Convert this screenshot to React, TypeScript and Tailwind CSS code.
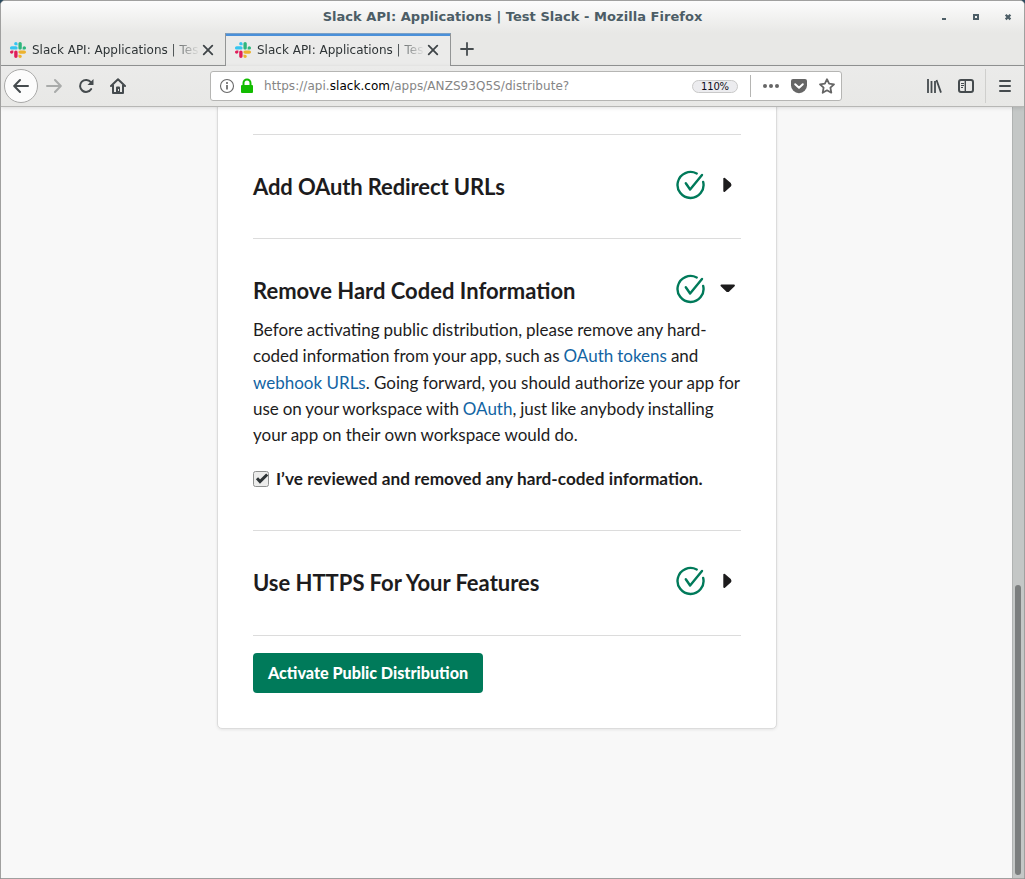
import React from "react";

const UI = "font-['DejaVu_Sans',sans-serif]";

function SlackLogo() {
  return (
    <svg width="16" height="16" viewBox="0 0 122.8 122.8" className="shrink-0">
      <path fill="#E01E5A" d="M25.8 77.6c0 7.1-5.8 12.9-12.9 12.9S0 84.7 0 77.6s5.8-12.9 12.9-12.9h12.9v12.9zm6.5 0c0-7.1 5.8-12.9 12.9-12.9s12.9 5.8 12.9 12.9v32.3c0 7.1-5.8 12.9-12.9 12.9s-12.9-5.8-12.9-12.9V77.6z" />
      <path fill="#36C5F0" d="M45.2 25.8c-7.1 0-12.9-5.8-12.9-12.9S38.1 0 45.2 0s12.9 5.8 12.9 12.9v12.9H45.2zm0 6.5c7.1 0 12.9 5.8 12.9 12.9s-5.8 12.9-12.9 12.9H12.9C5.8 58.1 0 52.3 0 45.2s5.8-12.9 12.9-12.9h32.3z" />
      <path fill="#2EB67D" d="M97 45.2c0-7.1 5.8-12.9 12.9-12.9s12.9 5.8 12.9 12.9-5.8 12.9-12.9 12.9H97V45.2zm-6.5 0c0 7.1-5.8 12.9-12.9 12.9s-12.9-5.8-12.9-12.9V12.9C64.7 5.8 70.5 0 77.6 0s12.9 5.8 12.9 12.9v32.3z" />
      <path fill="#ECB22E" d="M77.6 97c7.1 0 12.9 5.8 12.9 12.9s-5.8 12.9-12.9 12.9-12.9-5.8-12.9-12.9V97h12.9zm0-6.5c-7.1 0-12.9-5.8-12.9-12.9s5.8-12.9 12.9-12.9h32.3c7.1 0 12.9 5.8 12.9 12.9s-5.8 12.9-12.9 12.9H77.6z" />
    </svg>
  );
}

function TabContent() {
  return (
    <>
      <SlackLogo />
      <span className="ml-[6px] w-[166px] text-[12px] leading-4 whitespace-nowrap text-[#2e3436] [mask-image:linear-gradient(to_right,#000_136px,transparent_168px)]">
        Slack API: Applications | Tes
      </span>
      <svg width="12" height="12" viewBox="0 0 12 12" className="ml-1 shrink-0" stroke="#3f4548" strokeWidth="1.8" strokeLinecap="round">
        <path d="M1.7 1.7l8.6 8.6M10.3 1.7l-8.6 8.6" />
      </svg>
    </>
  );
}

function TitleBar() {
  return (
    <div className="relative flex h-[32px] shrink-0 items-center justify-center bg-linear-to-b from-[#fcfcfc] to-[#e8e8e6]">
      <span className="text-[13px] leading-4 font-bold tracking-[0.04px] whitespace-nowrap text-[#4c5d66]">
        Slack API: Applications | Test Slack - Mozilla Firefox
      </span>
      <svg width="80" height="12" viewBox="0 0 80 12" className="absolute top-[9px] right-[6px]">
        <path fill="#4c5d66" d="M4 8h4v2H4z" />
        <path fill="#4c5d66" fillRule="evenodd" d="M35 4h6v6h-6zM37 6v2h2V6z" />
        <path stroke="#4c5d66" strokeWidth="2.3" d="M67.7 4.7l4.7 4.7M72.4 4.7l-4.7 4.7" />
      </svg>
    </div>
  );
}

function TabStrip() {
  return (
    <div className="flex h-[33px] shrink-0 bg-[#e8e8e6]">
      <div className="flex w-[224px] items-center border-b border-[#939595] pt-px pl-[9px]">
        <TabContent />
      </div>
      <div className="flex w-[226px] items-center border-x border-t border-[#939595] border-t-[#79a0c8] bg-[#ebebea] pl-[9px] shadow-[inset_0_2px_0_#4a90d9]">
        <TabContent />
      </div>
      <div className="flex flex-1 items-center border-b border-[#939595] pl-[9px]">
        <svg width="14" height="14" viewBox="0 0 14 14" stroke="#454b4e" strokeWidth="1.8" strokeLinecap="round">
          <path d="M7 1v12M1 7h12" />
        </svg>
      </div>
    </div>
  );
}

function AddressBar() {
  return (
    <div className="flex h-[30px] w-[632px] items-center rounded-[3px] border border-[#b5b5b3] bg-white pl-2">
      <svg width="16" height="16" viewBox="0 0 16 16" fill="none">
        <circle cx="8" cy="8" r="6.5" stroke="#686868" strokeWidth="1.1" />
        <circle cx="8" cy="5" r="1" fill="#5c5c5c" />
        <path stroke="#5c5c5c" strokeWidth="1.6" d="M8 7v4.6" />
      </svg>
      <svg width="14" height="16" viewBox="0 0 14 16" className="ml-[5px]">
        <path fill="none" stroke="#12bc00" strokeWidth="2" d="M3.5 8V5a3.5 3.5 0 0 1 7 0v3" />
        <rect x="1" y="7" width="12" height="8" rx="1" fill="#12bc00" />
      </svg>
      <span className="ml-[10px] w-[428px] text-[12px] leading-4 tracking-[0.05px] whitespace-nowrap text-[#858585]">
        https://api.<span className="text-black">slack.com</span>/apps/ANZS93Q5S/distribute?
      </span>
      <span className="flex h-[13px] w-[46px] items-center justify-center rounded-full border border-[#c9c9c9] bg-[#ececef] text-[10px] tracking-[-0.2px] text-[#0c0c20]">110%</span>
      <span className="ml-3 h-[22px] w-px bg-[#b5b5b3]" />
      <svg width="16" height="16" viewBox="0 0 16 16" className="ml-3" fill="#666">
        <circle cx="2" cy="8" r="2" />
        <circle cx="8" cy="8" r="2" />
        <circle cx="14" cy="8" r="2" />
      </svg>
      <svg width="16" height="16" viewBox="0 0 16 16" className="ml-3">
        <path fill="#666" d="M2 1h12a2 2 0 0 1 2 2v4.2a8 8 0 0 1-16 0V3a2 2 0 0 1 2-2z" />
        <path fill="none" stroke="#fff" strokeWidth="2" strokeLinecap="round" strokeLinejoin="round" d="M4.2 6.2L8 9.8l3.8-3.6" />
      </svg>
      <svg width="16" height="16" viewBox="0 0 16 16" className="ml-3" fill="none" stroke="#666" strokeWidth="1.8" strokeLinejoin="round">
        <path d="M8 1.2l2.1 4.5 4.9.6-3.6 3.4.9 5L8 12.3l-4.3 2.4.9-5L1 6.3l4.9-.6z" />
      </svg>
    </div>
  );
}

function Toolbar() {
  return (
    <div className="relative z-10 flex h-[41px] shrink-0 items-center border-b border-[#b7b7b5] bg-linear-to-b from-[#ebebea] to-[#e8e8e6] pl-[3px] shadow-[0_1px_4px_rgba(0,0,0,0.12)]">
      <div className="flex size-[34px] items-center justify-center rounded-full border border-[#a9a9a8] bg-[#fcfcfc]">
        <svg width="16" height="16" viewBox="0 0 16 16" fill="none" stroke="#454b4e" strokeWidth="2" strokeLinecap="round" strokeLinejoin="round">
          <path d="M15 8H1.5M7 2L1.2 8 7 14" />
        </svg>
      </div>
      <svg width="16" height="16" viewBox="0 0 16 16" className="ml-2" fill="none" stroke="#a9abaa" strokeWidth="2" strokeLinecap="round" strokeLinejoin="round">
        <path d="M1 8h13.5M9 2l5.8 6L9 14" />
      </svg>
      <svg width="16" height="16" viewBox="0 0 16 16" className="ml-4">
        <path fill="none" stroke="#454b4e" strokeWidth="2" strokeLinecap="round" d="M12.8 4.2A6 6 0 1 0 13.2 11" />
        <path fill="#454b4e" d="M15.5 1v5.5a.5.5 0 0 1-.5.5H9.5z" />
      </svg>
      <svg width="16" height="16" viewBox="0 0 16 16" className="ml-4">
        <path fill="none" stroke="#454b4e" strokeWidth="2" strokeLinecap="round" strokeLinejoin="round" d="M1 8l7-6.8L15 8M3 7v8h10V7" />
        <path fill="#454b4e" fillRule="evenodd" d="M6 15V9.5a1 1 0 0 1 1-1h2a1 1 0 0 1 1 1V15zM8 11v2h1v-2z" />
      </svg>
      <div className="ml-[84px]">
        <AddressBar />
      </div>
      <svg width="16" height="16" viewBox="0 0 16 16" className="ml-[84px]" fill="none" stroke="#454b4e" strokeWidth="2">
        <path d="M2 1v14M5.5 3v12M9 3v12M10.5 2L15 14.6" strokeWidth="1.8" />
      </svg>
      <svg width="16" height="16" viewBox="0 0 16 16" className="ml-4" fill="none" stroke="#454b4e">
        <rect x="1" y="2" width="14" height="12" rx="2" strokeWidth="2" />
        <path d="M7.3 2v12" strokeWidth="1.4" />
        <path d="M3 5.5h3M3 7.5h3M3 9.5h2" strokeWidth="1" />
      </svg>
      <span className="ml-[11px] h-[34px] w-px bg-[#cfcfcd]" />
      <svg width="14" height="14" viewBox="0 0 14 14" className="ml-[12px]" stroke="#454b4e" strokeWidth="2" strokeLinecap="round">
        <path d="M2 2h10M2 7h10M2 12h10" />
      </svg>
    </div>
  );
}

function DoneIcon() {
  return (
    <svg width="30" height="30" viewBox="0 0 30 30" fill="none" stroke="#007a5a" strokeWidth="2.4" strokeLinecap="round" strokeLinejoin="round">
      <path d="M20.7 3.5A13 13 0 1 0 27.2 12" />
      <path d="M9.8 13.3L14.1 19.5 26 4.9" />
    </svg>
  );
}

function SectionHeading({ title, open = false, spacing = "" }: { title: string; open?: boolean; spacing?: string }) {
  return (
    <div className="flex h-[30px] items-center">
      <h4 className={`flex-1 pt-[3px] text-[22px] leading-[30px] font-bold whitespace-nowrap ${spacing}`}>{title}</h4>
      <DoneIcon />
      <svg width="16" height="16" viewBox="0 0 16 16" className="mr-[5px] ml-[14px]" fill="#1d1c1d" stroke="#1d1c1d" strokeWidth="2" strokeLinejoin="round">
        {open ? <path d="M1.5 4.5h12.4L8.7 9.6q-1 .8-2 0z" /> : <path d="M4.3 1.7v12.2l5.8-5.1q.8-1 0-2z" />}
      </svg>
    </div>
  );
}

function Link({ children }: { children: React.ReactNode }) {
  return <a className="text-[#1264a3]">{children}</a>;
}

function DistributionCard() {
  return (
    <div className="-mt-2 h-[630px] w-[560px] rounded-[5px] border border-[#dcdcdc] bg-white px-[35px] pt-[34px] font-[Lato,sans-serif] text-[#1d1c1d] shadow-[0_1px_3px_rgba(0,0,0,0.08)]">
      <div className="h-[104px] border-t border-[#dcdcdc] pt-[35px]">
        <SectionHeading title="Add OAuth Redirect URLs" spacing="tracking-[-0.12px]" />
      </div>
      <div className="h-[292px] border-t border-[#dcdcdc] pt-[35px]">
        <SectionHeading title="Remove Hard Coded Information" open />
        <p className="mt-[13px] text-[17px] leading-[26.3px] whitespace-nowrap">
          <span className="[word-spacing:-0.4px]">Before activating public distribution, please remove any hard-</span>
          <br />
          <span className="[word-spacing:-0.35px]">coded information from your app, such as <Link>OAuth tokens</Link> and</span>
          <br />
          <Link>webhook URLs</Link>. Going forward, you should authorize your app for
          <br />
          <span className="[word-spacing:-0.45px]">use on your workspace with <Link>OAuth</Link>, just like anybody installing</span>
          <br />
          <span className="[word-spacing:-0.15px]">your app on their own workspace would do.</span>
        </p>
        <label className="mt-[18px] flex h-[26px] items-center">
          <svg width="16" height="16" viewBox="0 0 16 16" className="mr-[7px]">
            <rect x=".5" y=".5" width="15" height="15" rx="2" fill="#ececeb" stroke="#8f9190" />
            <path fill="none" stroke="#2e3436" strokeWidth="3" d="M4 7.3l3 3.2 7.2-7" />
          </svg>
          <span className="text-[17.2px] leading-[26px] font-bold whitespace-nowrap [word-spacing:0.2px]">
            I’ve reviewed and removed any hard-coded information.
          </span>
        </label>
      </div>
      <div className="h-[105px] border-t border-[#dcdcdc] pt-[35px]">
        <SectionHeading title="Use HTTPS For Your Features" spacing="[word-spacing:-0.2px]" />
      </div>
      <div className="border-t border-[#dcdcdc] pt-[17px]">
        <button className="h-[40px] w-[230px] rounded-[4px] bg-[#007a5a] text-[16.15px] font-black whitespace-nowrap text-white">
          Activate Public Distribution
        </button>
      </div>
    </div>
  );
}

export default function App() {
  return (
    <div className="h-[879px] w-[1025px] overflow-hidden bg-[#2b4a5e]">
      <div className={`flex h-full flex-col overflow-hidden rounded-t-[5px] border border-[#a0a09f] bg-[#e8e8e6] ${UI}`}>
        <TitleBar />
        <TabStrip />
        <Toolbar />
        <div className="flex min-h-0 flex-1 overflow-hidden">
          <div className="flex-1 bg-[#f8f8f8] pl-[216px]">
            <DistributionCard />
          </div>
          <div className="w-[12px] border-l border-[#b0b3b2] bg-[#c4c7c6] pt-[478px] pl-[2px]">
            <div className="h-[290px] w-[6px] rounded-full bg-[#7b7e7e]" />
          </div>
        </div>
      </div>
    </div>
  );
}
